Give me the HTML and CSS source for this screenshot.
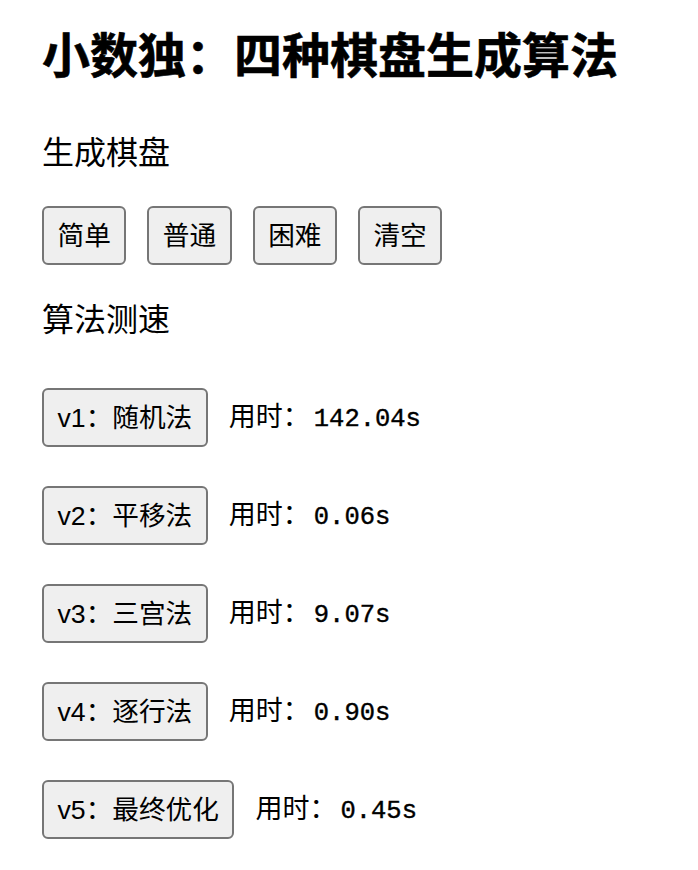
FILE: index.html
```html
<!DOCTYPE html>
<html lang="zh-CN">
<head>
<meta charset="utf-8">
<title>小数独：四种棋盘生成算法</title>
<link rel="stylesheet" href="styles.css">
</head>
<body>
<main class="page">
  <h1 class="title">小数独：四种棋盘生成算法</h1>
  <p class="section">生成棋盘</p>
  <div class="btn-row">
    <button class="btn">简单</button>
    <button class="btn">普通</button>
    <button class="btn">困难</button>
    <button class="btn">清空</button>
  </div>
  <p class="section section-bench">算法测速</p>
  <div class="bench">
    <div class="bench-row"><button class="btn">v1：随机法</button><span class="time"><span class="time-label">用时：</span>142.04s</span></div>
    <div class="bench-row"><button class="btn">v2：平移法</button><span class="time"><span class="time-label">用时：</span>0.06s</span></div>
    <div class="bench-row"><button class="btn">v3：三宫法</button><span class="time"><span class="time-label">用时：</span>9.07s</span></div>
    <div class="bench-row"><button class="btn">v4：逐行法</button><span class="time"><span class="time-label">用时：</span>0.90s</span></div>
    <div class="bench-row"><button class="btn">v5：最终优化</button><span class="time"><span class="time-label">用时：</span>0.45s</span></div>
  </div>
</main>
</body>
</html>
```

FILE: styles.css
```css
html, body {
  margin: 0;
  padding: 0;
  background: #ffffff;
}

body {
  font-family: "Liberation Sans", "Noto Sans CJK SC", sans-serif;
  color: #000000;
}

.page {
  display: flex;
  flex-direction: column;
  align-items: flex-start;
  padding: 28px 42px 0 42px;
}

.title {
  margin: 0;
  font-size: 48px;
  line-height: 58px;
  font-weight: 700;
  -webkit-text-stroke: 0.6px #000000;
}

.section {
  margin: 48px 0 0 0;
  font-size: 32px;
  line-height: 38px;
}

.section-bench {
  margin-top: 36px;
}

.btn-row {
  display: flex;
  gap: 21px;
  margin-top: 34px;
}

.btn {
  box-sizing: border-box;
  height: 59px;
  padding: 0 13.5px;
  border: 2px solid #767676;
  border-radius: 6px;
  background: #efefef;
  color: #000000;
  font-family: "Liberation Sans", "Noto Sans CJK SC", sans-serif;
  font-size: 26.67px;
  line-height: 32px;
}

.bench {
  display: flex;
  flex-direction: column;
  gap: 39px;
  margin-top: 49px;
}

.bench-row {
  display: flex;
  align-items: center;
  gap: 21px;
}

.time {
  display: flex;
  align-items: baseline;
  font-family: "Liberation Mono", "Noto Sans CJK SC", monospace;
  font-size: 25.5px;
  line-height: 32px;
  -webkit-text-stroke: 0.4px #000000;
}

.time-label {
  font-family: "Noto Sans CJK SC", sans-serif;
  font-size: 27px;
  width: 85px;
  -webkit-text-stroke: 0;
}
```
